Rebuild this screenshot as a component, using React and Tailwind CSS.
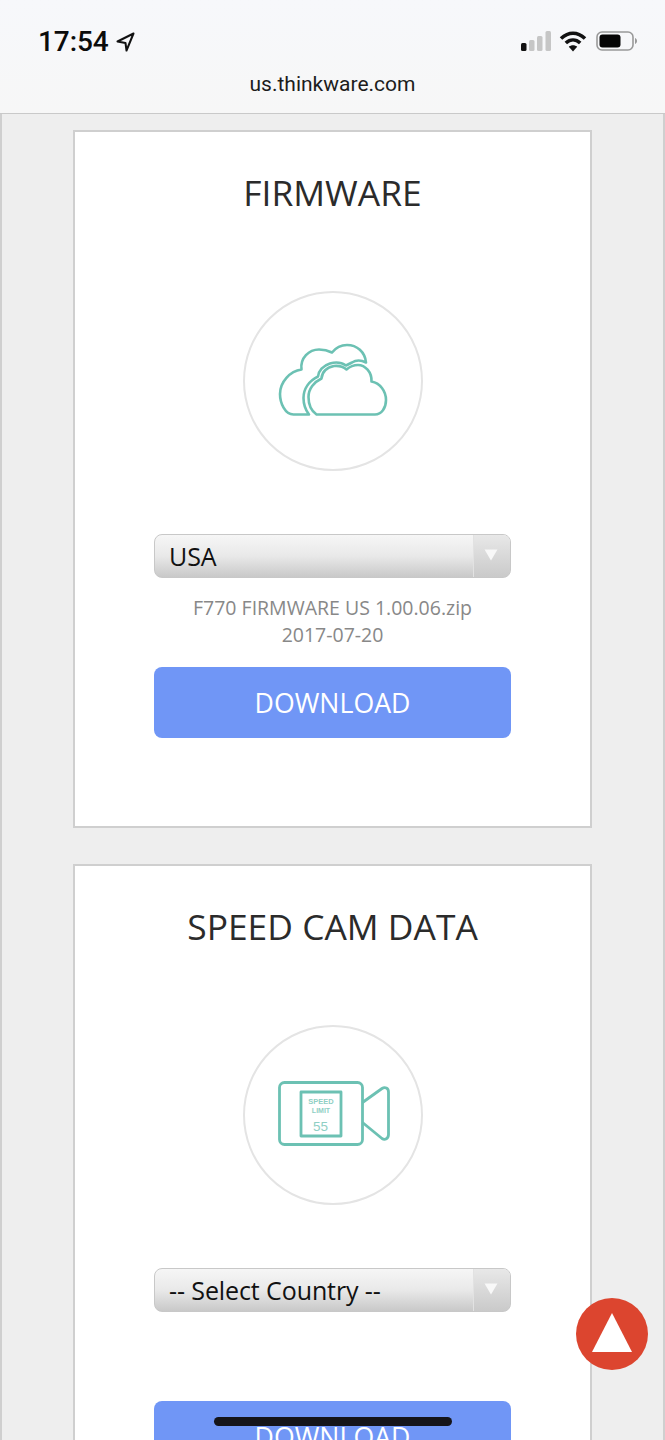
import React from 'react';

const CloudIcon = () => (
  <svg width="180" height="180" viewBox="0 0 180 180" fill="none" stroke="#6cc1b3" strokeWidth="2.6" strokeLinejoin="round" strokeLinecap="round">
    {/* back cloud */}
    <path d="M66 123.5H50.5C42 123.5 37 112 37 103C37 91 47 80 58.5 78.5C57 67 66 58.5 76 58.5C81 58.5 85 59.5 89 61.5C93 56.5 98 54 104 54C114 54 122 61 123 71.5C118 69 113 69 109 71.5L103 74.5C98 71 92 71 87 72.5C80 74.5 75.5 80 75 85.5C66 90 60.5 98 60.5 107C60.5 113 62.5 119 66 123.5Z" />
    {/* front cloud */}
    <path d="M73.5 123.5H132C138.5 123.5 143 117 143 109C143 100 137 92 128.5 90.5C129 81 122 74 115 74C110 74 107 75.5 103.5 78.5C100 75.5 96 74.5 91 75C84 76.5 79 81 78.5 87.5C71 91 65.5 98 65.5 106C65.5 114 68.5 120 73.5 123.5Z" />
  </svg>
);

const CameraIcon = () => (
  <svg width="180" height="180" viewBox="0 0 180 180" fill="none" stroke="#6cc1b3" strokeWidth="2.8" strokeLinejoin="round">
    <rect x="36.5" y="57.5" width="83" height="62" rx="5" />
    <rect x="58" y="67" width="40" height="44" strokeWidth="2.8" />
    <path d="M119.5 77.5L139 63.5C142 61.5 145.5 63 145.5 67V109.5C145.5 113.5 142 115.5 139 113.5L119.5 97.5" />
    <g fill="#8fcfc4" stroke="none" fontFamily="'Liberation Sans', sans-serif" textAnchor="middle">
      <text x="78" y="79" fontSize="7.5" fontWeight="700">SPEED</text>
      <text x="78" y="88" fontSize="7" fontWeight="700">LIMIT</text>
      <text x="77.5" y="106" fontSize="13.5">55</text>
    </g>
  </svg>
);

const StatusIcons = () => (
  <div className="mb-[2px] flex items-center">
    <svg width="31" height="20" viewBox="0 0 31 20" fill="#c6c6c6">
      <rect x="1" y="12" width="5.5" height="8" rx="1.5" fill="#111" />
      <rect x="9" y="9" width="5.5" height="11" rx="1.5" />
      <rect x="17" y="5" width="5.5" height="15" rx="1.5" />
      <rect x="25.5" y="0" width="5.5" height="20" rx="1.5" />
    </svg>
    <svg className="ml-[8px]" width="28" height="22" viewBox="0 0 28 22" fill="none" stroke="#111" strokeWidth="3.6">
      <path d="M2 8.5C9.5 1.5 18.5 1.5 26 8.5" />
      <path d="M6.8 13C11.2 9 16.8 9 21.2 13" />
      <path d="M14 21.5L9.8 16.8C12.2 14.8 15.8 14.8 18.2 16.8Z" fill="#111" stroke="none" />
    </svg>
    <svg className="ml-[9px]" width="41" height="20" viewBox="0 0 41 20" fill="none">
      <rect x="1" y="1" width="36" height="18" rx="5" stroke="#999" strokeWidth="1.6" />
      <rect x="3.5" y="3.5" width="21" height="13" rx="3" fill="#050505" />
      <path d="M39 7C40.3 7.5 41 8.6 41 10C41 11.4 40.3 12.5 39 13Z" fill="#999" />
    </svg>
  </div>
);

const FakeSelect = ({ label }) => (
  <div className="flex h-[44px] w-[357px] overflow-hidden rounded-[8px] border border-[#c8c8c8] bg-gradient-to-b from-[#f6f6f6] via-[#e9e9e9] to-[#c9c9c9]">
    <div className="flex-1 pl-[14px] text-[25px] leading-[42px] tracking-[-0.1px] text-[#111]">{label}</div>
    <div className="flex w-[37px] justify-center border-l border-[#e2e2e2] bg-gradient-to-b from-[#e8e8e8] to-[#cacaca] pr-[2px] pt-[14px]">
      <svg width="14" height="12" viewBox="0 0 14 12">
        <path d="M0.5 0.5H13.5L7 11.5Z" fill="#f8f8f8" />
      </svg>
    </div>
  </div>
);

const Card = ({ title, icon, select, lines }) => (
  <section className="mx-auto flex h-[698px] w-[519px] shrink-0 flex-col items-center border-2 border-[#cfcfcf] bg-white">
    <h2 className="mt-[36px] h-[48px] text-[35.4px] leading-[48px] text-[#2b2b2b]">{title}</h2>
    <div className="mt-[75px] flex h-[180px] w-[180px] items-center justify-center rounded-full border-2 border-[#e4e4e4]">
      <div className="shrink-0">{icon}</div>
    </div>
    <div className="mt-[63px]">
      <FakeSelect label={select} />
    </div>
    <div className="mt-[16px] h-[73px] text-center text-[19.5px] leading-[27px] text-[#888]">
      {lines.map((line) => (
        <p key={line}>{line}</p>
      ))}
    </div>
    <button className="h-[71px] w-[357px] shrink-0 rounded-[8px] bg-[#7096f6] pt-[2px] text-[26.7px] text-white">DOWNLOAD</button>
  </section>
);

const App = () => {
  return (
    <div className="relative h-[1440px] w-full overflow-hidden bg-[#eeeeee] font-['Open_Sans',sans-serif]">
      {/* Browser chrome */}
      <header className="h-[114px] border-b border-[#c9c9c9] bg-gradient-to-b from-[#f7f8fb] to-[#f7f7f7] font-['Roboto',sans-serif]">
        <div className="flex h-[72px] items-center justify-between pl-[38px] pr-[28px] pt-[12px]">
          <div className="flex items-center">
            <span className="text-[28px] font-medium leading-none tracking-[-0.1px] text-[#0c0c0c]">17:54</span>
            <svg className="ml-[7px]" width="19" height="20" viewBox="0 0 19 20" fill="none" stroke="#111" strokeWidth="2" strokeLinejoin="round">
              <path d="M17.5 1.5L1.5 9.5L9.5 11L10.5 18.5Z" />
            </svg>
          </div>
          <StatusIcons />
        </div>
        <p className="text-center text-[21px] leading-[24px] text-[#1c1c1c]">us.thinkware.com</p>
      </header>

      {/* Page content */}
      <main className="flex h-full flex-col gap-[36px] border-x-2 border-[#cfcfcf] pt-[16px]">
        <Card
          title="FIRMWARE"
          icon={<CloudIcon />}
          select="USA"
          lines={['F770 FIRMWARE US 1.00.06.zip', '2017-07-20']}
        />
        <Card title="SPEED CAM DATA" icon={<CameraIcon />} select="-- Select Country --" lines={[]} />
      </main>

      {/* Scroll to top */}
      <div className="absolute left-[576px] top-[1298px] flex h-[72px] w-[72px] items-center justify-center rounded-full bg-[#dc452f]">
        <svg className="mb-[4px]" width="40" height="39" viewBox="0 0 40 39">
          <path d="M20 0L40 39H0Z" fill="#fff" />
        </svg>
      </div>

      {/* Home indicator */}
      <div className="absolute left-[214px] top-[1417px] h-[9px] w-[238px] rounded-full bg-[#15151a]" />
    </div>
  );
};

export default App;
